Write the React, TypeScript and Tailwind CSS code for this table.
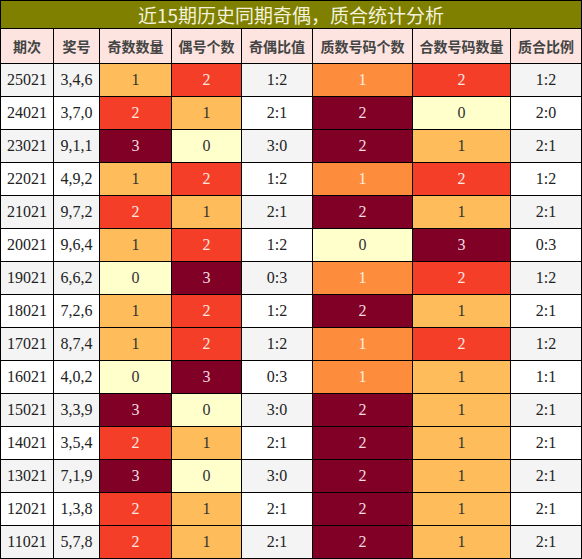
const rows: [string, string, number, number, string, number, number, string][] = [
  ["25021", "3,4,6", 1, 2, "1:2", 1, 2, "1:2"],
  ["24021", "3,7,0", 2, 1, "2:1", 2, 0, "2:0"],
  ["23021", "9,1,1", 3, 0, "3:0", 2, 1, "2:1"],
  ["22021", "4,9,2", 1, 2, "1:2", 1, 2, "1:2"],
  ["21021", "9,7,2", 2, 1, "2:1", 2, 1, "2:1"],
  ["20021", "9,6,4", 1, 2, "1:2", 0, 3, "0:3"],
  ["19021", "6,6,2", 0, 3, "0:3", 1, 2, "1:2"],
  ["18021", "7,2,6", 1, 2, "1:2", 2, 1, "2:1"],
  ["17021", "8,7,4", 1, 2, "1:2", 1, 2, "1:2"],
  ["16021", "4,0,2", 0, 3, "0:3", 1, 1, "1:1"],
  ["15021", "3,3,9", 3, 0, "3:0", 2, 1, "2:1"],
  ["14021", "3,5,4", 2, 1, "2:1", 2, 1, "2:1"],
  ["13021", "7,1,9", 3, 0, "3:0", 2, 1, "2:1"],
  ["12021", "1,3,8", 2, 1, "2:1", 2, 1, "2:1"],
  ["11021", "5,7,8", 2, 1, "2:1", 2, 1, "2:1"],
];

const headers = ["期次", "奖号", "奇数数量", "偶号个数", "奇偶比值", "质数号码个数", "合数号码数量", "质合比例"];
const widths = ["w-[53px]", "w-[46px]", "w-[72px]", "w-[70px]", "w-[71px]", "w-[100px]", "w-[98px]", "w-[71px]"];

// four-step scale used by most count columns
const scale = [
  "bg-[#ffffcc] text-[#333]",
  "bg-[#febd5a] text-[#333]",
  "bg-[#f43e27] text-[#fde8e0]",
  "bg-[#800026] text-[#f4dce0]",
];
// prime column has its own three-step scale
const primeScale = [
  "bg-[#ffffcc] text-[#333]",
  "bg-[#fd8c3c] text-[#fdeee0]",
  "bg-[#800026] text-[#f4dce0]",
];

const cell = "border border-black text-center p-0";
const sans = { fontFamily: '"Noto Sans CJK SC", sans-serif' };

export default function App() {
  return (
    <div className="w-[582px] h-[559px] bg-white" style={{ fontFamily: '"Liberation Serif", "Noto Sans CJK SC", serif' }}>
      <table className="w-[582px] border-collapse table-fixed">
        <colgroup>
          {widths.map((w, i) => (
            <col key={i} className={w} />
          ))}
        </colgroup>
        <thead>
          <tr className="h-[28px]">
            <th
              colSpan={8}
              className="border border-black bg-[#808000] text-[#f2f2dc] text-[19px] font-normal text-center p-0 leading-none"
              style={sans}
            >
              近15期历史同期奇偶，质合统计分析
            </th>
          </tr>
          <tr className="h-[35px]">
            {headers.map((h) => (
              <th key={h} className={`${cell} bg-[#fde4e0] text-[#444] text-[14px] font-bold`} style={sans}>
                {h}
              </th>
            ))}
          </tr>
        </thead>
        <tbody>
          {rows.map((r, i) => {
            const base = i % 2 === 0 ? "bg-[#f4f4f4]" : "bg-white";
            return (
              <tr key={r[0]} className="h-[33px] text-[16px] text-[#222]">
                <td className={`${cell} ${base}`}>{r[0]}</td>
                <td className={`${cell} ${base}`}>{r[1]}</td>
                <td className={`${cell} ${scale[r[2]]}`}>{r[2]}</td>
                <td className={`${cell} ${scale[r[3]]}`}>{r[3]}</td>
                <td className={`${cell} ${base}`}>{r[4]}</td>
                <td className={`${cell} ${primeScale[r[5]]}`}>{r[5]}</td>
                <td className={`${cell} ${scale[r[6]]}`}>{r[6]}</td>
                <td className={`${cell} ${base}`}>{r[7]}</td>
              </tr>
            );
          })}
        </tbody>
      </table>
    </div>
  );
}
